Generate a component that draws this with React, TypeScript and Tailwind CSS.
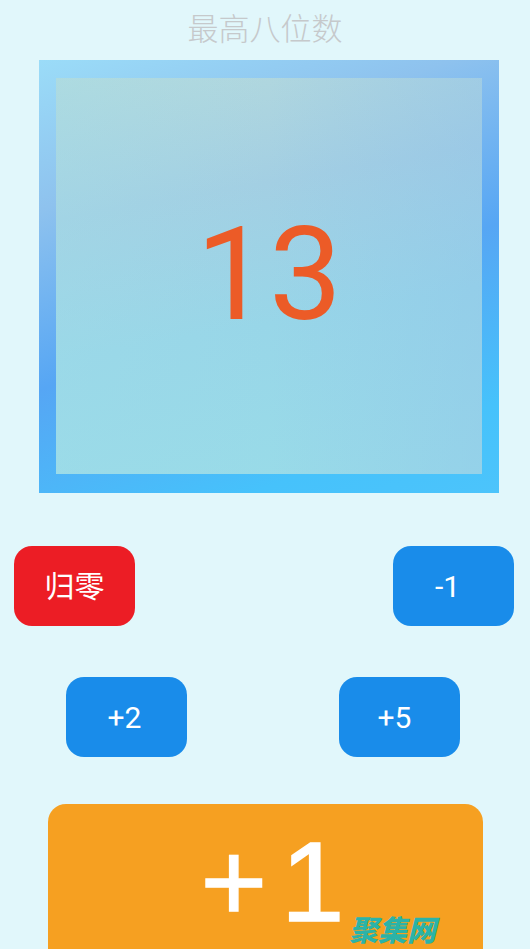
import React from "react";

const cjk = { fontFamily: 'Roboto, "Noto Sans CJK SC", sans-serif' };

function Btn({ label, color, className = "" }: { label: string; color: string; className?: string }) {
  return (
    <div
      className={`w-[121px] h-[80px] rounded-[18px] flex items-center justify-center text-white text-[30px] ${color} ${className}`}
      style={cjk}
    >
      {label}
    </div>
  );
}

export default function App() {
  return (
    <div className="relative w-[530px] h-[949px] overflow-hidden bg-[#e1f7fb]" style={cjk}>
      <div className="h-[60px] flex items-center justify-center text-[31px] text-[#c6c9cb] font-light">
        最高八位数
      </div>
      <div className="ml-[39px] w-[460px] h-[433px] p-[17px] pt-[18px] pb-[19px] bg-[linear-gradient(160deg,#9bdcf8_0%,#8ec2ee_25%,#56a6f4_55%,#46c2fb_85%,#4cc4fb_100%)]">
        <div className="relative w-full h-full flex items-center justify-center bg-[linear-gradient(170deg,#b4d9dd_0%,#a3cfe3_30%,#98d6e8_60%,#99dce8_100%)]">
          <div className="absolute inset-0 bg-[linear-gradient(90deg,rgba(160,222,232,0.35)_0%,rgba(160,222,232,0)_50%,rgba(140,190,235,0.35)_100%)]" />
          <span className="relative text-[130px] leading-none text-[#ec5b27] -mt-[2px]" style={{ fontFamily: "Roboto, sans-serif" }}>
            13
          </span>
        </div>
      </div>
      <div className="mt-[53px] ml-[14px] mr-[16px] flex justify-between">
        <Btn label="归零" color="bg-[#ec1d25]" />
        <Btn label="-1" color="bg-[#198cea]" className="pr-[12px]" />
      </div>
      <div className="mt-[51px] ml-[66px] w-[394px] flex justify-between">
        <Btn label="+2" color="bg-[#198cea]" className="pr-[4px]" />
        <Btn label="+5" color="bg-[#198cea]" className="pr-[10px]" />
      </div>
      <div
        className="relative mt-[47px] ml-[48px] w-[435px] h-[170px] rounded-[18px] bg-[#f6a021] flex justify-center text-white"
        style={{ fontFamily: '"Liberation Sans", Arial, sans-serif' }}
      >
        <span className="text-[114px] leading-none mt-[21px] pl-[14px] [-webkit-text-stroke:1.5px_white]">
          <span>+</span>
          <span className="ml-[14px]">1</span>
        </span>
      </div>
      <div
        className="absolute left-[349px] top-[907px] text-[29px] font-black italic text-[#2bb3a8]"
        style={{ fontFamily: '"Noto Sans CJK SC", sans-serif' }}
      >
        聚集网
      </div>
    </div>
  );
}
